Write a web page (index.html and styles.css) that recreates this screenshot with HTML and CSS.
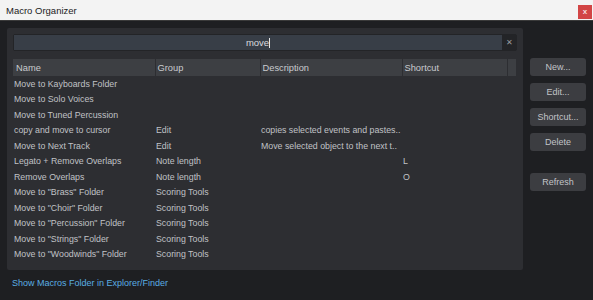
FILE: index.html
```html
<!DOCTYPE html>
<html lang="en">
<head>
  <meta charset="UTF-8" />
  <title>Macro Organizer</title>
  <link rel="stylesheet" href="styles.css">
</head>
<body>
  <div class="titlebar">
    <span class="title">Macro Organizer</span>
    <span class="close">x</span>
  </div>

  <div class="window">
    <div class="main">
      <div class="panel">
        <div class="search">
          <div class="search-field"><span class="query">move</span><span class="caret"></span></div>
          <div class="clear">&#x2715;</div>
        </div>
        <table class="macros">
          <thead>
            <tr>
              <th class="c-name">Name</th>
              <th class="c-group">Group</th>
              <th class="c-desc">Description</th>
              <th class="c-short">Shortcut</th>
              <th class="c-scroll"></th>
            </tr>
          </thead>
          <tbody>
            <tr><td>Move to Kayboards Folder</td><td></td><td></td><td></td><td></td></tr>
            <tr><td>Move to Solo Voices</td><td></td><td></td><td></td><td></td></tr>
            <tr><td>Move to Tuned Percussion</td><td></td><td></td><td></td><td></td></tr>
            <tr><td>copy and move to cursor</td><td>Edit</td><td>copies selected events and pastes..</td><td></td><td></td></tr>
            <tr><td>Move to Next Track</td><td>Edit</td><td>Move selected object to the next t..</td><td></td><td></td></tr>
            <tr><td>Legato + Remove Overlaps</td><td>Note length</td><td></td><td>L</td><td></td></tr>
            <tr><td>Remove Overlaps</td><td>Note length</td><td></td><td>O</td><td></td></tr>
            <tr><td>Move to "Brass" Folder</td><td>Scoring Tools</td><td></td><td></td><td></td></tr>
            <tr><td>Move to "Choir" Folder</td><td>Scoring Tools</td><td></td><td></td><td></td></tr>
            <tr><td>Move to "Percussion" Folder</td><td>Scoring Tools</td><td></td><td></td><td></td></tr>
            <tr><td>Move to "Strings" Folder</td><td>Scoring Tools</td><td></td><td></td><td></td></tr>
            <tr><td>Move to "Woodwinds" Folder</td><td>Scoring Tools</td><td></td><td></td><td></td></tr>
          </tbody>
        </table>
      </div>
      <a class="folder-link">Show Macros Folder in Explorer/Finder</a>
    </div>

    <div class="side">
      <button>New...</button>
      <button>Edit...</button>
      <button>Shortcut...</button>
      <button>Delete</button>
      <button class="refresh">Refresh</button>
    </div>
  </div>
</body>
</html>
```

FILE: styles.css
```css
body {
  margin: 0;
  font-family: "Segoe UI", "Liberation Sans", Arial, sans-serif;
  font-size: 9px;
  background: #1e1f22;
  color: #c3c5c9;
  width: 593px;
  height: 300px;
  overflow: hidden;
}
.titlebar {
  height: 20px;
  background: #f3f3f3;
  border-bottom: 1px solid #3a3a3a;
  display: flex;
  align-items: center;
  justify-content: space-between;
}
.title {
  color: #1b1b1b;
  font-size: 9.5px;
  padding-left: 6px;
  padding-top: 1px;
}
.close {
  width: 14px;
  height: 14px;
  margin-right: 1px;
  margin-top: 3px;
  background: #d24545;
  color: #f4dede;
  font-size: 8px;
  font-weight: bold;
  display: flex;
  align-items: center;
  justify-content: center;
}
.window {
  display: flex;
  padding: 7px 0 0 7px;
}
.main {
  width: 516px;
}
.panel {
  background: #2d2e32;
  border-radius: 2px;
  height: 242px;
  padding: 6px 6px 0 6px;
  box-sizing: border-box;
}
.search {
  display: flex;
  height: 15px;
  border: 1px solid #232427;
  border-radius: 2px;
  background: #232427;
}
.search-field {
  flex: 1;
  background: #383e47;
  display: flex;
  align-items: center;
  justify-content: center;
  color: #d8dade;
  font-size: 9.5px;
}
.caret {
  width: 1px;
  height: 10px;
  background: #e6e6e6;
}
.clear {
  width: 14px;
  color: #9a9ca0;
  font-size: 8px;
  display: flex;
  align-items: center;
  justify-content: center;
}
.macros {
  width: 503px;
  margin-top: 8px;
  border-collapse: collapse;
  table-layout: fixed;
}
.macros th,
.macros td {
  box-sizing: border-box;
}
.macros th {
  background: #3d3f43;
  height: 17px;
  padding: 0 2px;
  text-align: left;
  font-weight: normal;
  font-size: 9.3px;
  color: #c9cbcf;
  border-left: 1px solid #2d2e32;
}
.macros th:first-child {
  border-left: none;
  padding-left: 3px;
}
.c-name { width: 142px; }
.c-group { width: 105px; }
.c-desc { width: 142px; }
.c-short { width: 105px; }
.c-scroll { width: 9px; padding: 0 !important; }
.macros td {
  height: 15.5px;
  padding: 0 0 0 1px;
  white-space: nowrap;
  font-size: 8.8px;
  color: #c0c2c6;
}
.folder-link {
  display: block;
  color: #5aaee3;
  margin: 8px 0 0 5px;
  font-size: 9px;
}
.side {
  display: flex;
  flex-direction: column;
  padding-top: 30px;
  margin-left: 7px;
}
button {
  width: 56px;
  height: 18px;
  margin-bottom: 7px;
  background: #3c3d41;
  color: #c2c4c8;
  border: none;
  border-radius: 3px;
  font-family: "Segoe UI", "Liberation Sans", Arial, sans-serif;
  font-size: 9px;
  padding: 0;
}
.refresh {
  margin-top: 15px;
}
```
